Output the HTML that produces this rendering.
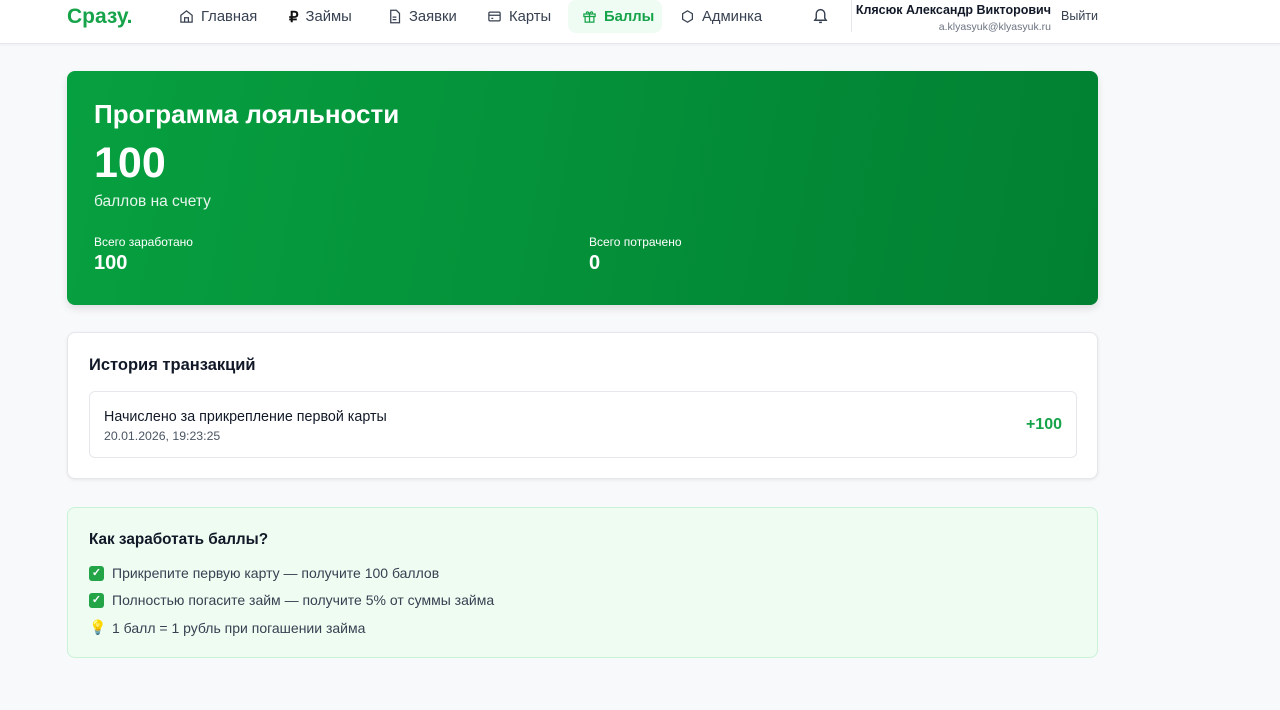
<!DOCTYPE html>
<html><head><meta charset="utf-8"><style>
*{box-sizing:border-box;margin:0;padding:0}
body{width:1280px;height:710px;overflow:hidden;background:#f8f9fb;font-family:"Liberation Sans",sans-serif;color:#111827}
.hdr{height:44px;background:#fff;border-bottom:1px solid #e5e7eb;box-shadow:0 1px 3px rgba(0,0,0,.05);position:relative}
.logo{position:absolute;left:67px;top:5px;font-size:21px;font-weight:bold;color:#16a34a}
.nav a{position:absolute;top:0;display:flex;align-items:center;gap:7px;font-size:14.8px;color:#374151;text-decoration:none;height:33px;white-space:nowrap}
.nav a.act{background:#effcf3;color:#16a34a;font-weight:bold;border-radius:8px;padding:0 12px 0 14px;width:94px}
.nav svg{width:15px;height:15px;fill:none;stroke:currentColor;stroke-width:2;flex-shrink:0}
.bell{position:absolute;left:812px;top:7px}
.sep{position:absolute;left:851px;top:0;height:32px;border-left:1px solid #e5e7eb}
.user{position:absolute;right:229px;top:3px;text-align:right}
.user b{font-size:12.5px;display:block}
.user span{font-size:10.5px;color:#6b7280}
.out{position:absolute;left:1061px;top:9px;font-size:12.5px;color:#374151}
.hero{position:absolute;left:67px;top:71px;width:1031px;height:234px;border-radius:8px;background:linear-gradient(100deg,#07a040,#018032);color:#fff;box-shadow:0 4px 8px rgba(0,0,0,.1)}
.hero h1{position:absolute;left:27px;top:28px;font-size:26px}
.hero .big{position:absolute;left:27px;top:68px;font-size:43px;font-weight:bold}
.hero .sub{position:absolute;left:27px;top:122px;font-size:15.5px;opacity:.9}
.hero .lb{position:absolute;top:164px;font-size:12px}
.hero .vl{position:absolute;top:181px;font-size:20px;font-weight:bold}
.card{position:absolute;left:67px;top:332px;width:1031px;height:147px;background:#fff;border:1px solid #e5e7eb;border-radius:8px;box-shadow:0 1px 3px rgba(0,0,0,.08)}
.card h2{position:absolute;left:21px;top:23px;font-size:16.5px}
.row{position:absolute;left:21px;top:58px;width:988px;height:67px;border:1px solid #e5e7eb;border-radius:6px}
.row .t{position:absolute;left:14px;top:17px;font-size:14.3px}
.row .d{position:absolute;left:14px;top:37px;font-size:12.3px;color:#4b5563}
.row .p{position:absolute;right:14px;top:24px;font-size:16px;font-weight:bold;color:#16a34a}
.info{position:absolute;left:67px;top:507px;width:1031px;height:151px;background:#eefcf2;border:1px solid #c9f2d6;border-radius:8px}
.info h3{position:absolute;left:21px;top:23px;font-size:15.3px}
.info p{position:absolute;left:21px;font-size:14px;color:#374151;display:flex;gap:8px;align-items:center}
.ck{display:inline-block;width:15px;height:15px;background:#22a447;border-radius:3px;color:#fff;font-size:11px;text-align:center;line-height:15px;font-weight:bold}
</style></head><body>
<div class="hdr">
<div class="logo">Сразу.</div>
<div class="nav">
<a style="left:179px"><svg viewBox="0 0 24 24"><path d="M3 10l9-7 9 7v11H3z M9 21v-7h6v7"/></svg>Главная</a>
<a style="left:289px"><span style="font-weight:bold;font-size:15px;color:#111">₽</span>Займы</a>
<a style="left:387px"><svg viewBox="0 0 24 24"><path d="M6 2h9l5 5v15H6z M9 13h6 M9 17h6"/></svg>Заявки</a>
<a style="left:487px"><svg viewBox="0 0 24 24"><rect x="3" y="5" width="18" height="14" rx="2"/><path d="M3 10h18 M7 15h3"/></svg>Карты</a>
<a class="act" style="left:568px"><svg viewBox="0 0 24 24"><rect x="3" y="8" width="18" height="4"/><path d="M5 12v9h14v-9 M12 8v13 M12 8C10 3 6 4 7.5 7 M12 8c2-5 6-4 4.5-1"/></svg>Баллы</a>
<a style="left:680px"><svg viewBox="0 0 24 24"><path d="M12 3l7.8 4.5v9L12 21l-7.8-4.5v-9z"/></svg>Админка</a>
</div>
<svg class="bell" width="17" height="18" viewBox="0 0 24 24" fill="none" stroke="#374151" stroke-width="2"><path d="M6 9a6 6 0 0112 0v6l2 3H4l2-3z M10 21h4"/></svg>
<div class="sep"></div>
<div class="user"><b>Клясюк Александр Викторович</b><span>a.klyasyuk@klyasyuk.ru</span></div>
<div class="out">Выйти</div>
</div>
<div class="hero">
<h1>Программа лояльности</h1>
<div class="big">100</div>
<div class="sub">баллов на счету</div>
<div class="lb" style="left:27px">Всего заработано</div><div class="vl" style="left:27px">100</div>
<div class="lb" style="left:522px">Всего потрачено</div><div class="vl" style="left:522px">0</div>
</div>
<div class="card"><h2>История транзакций</h2>
<div class="row"><div class="t">Начислено за прикрепление первой карты</div><div class="d">20.01.2026, 19:23:25</div><div class="p">+100</div></div></div>
<div class="info"><h3>Как заработать баллы?</h3>
<p style="top:57px"><span class="ck">✓</span>Прикрепите первую карту — получите 100 баллов</p>
<p style="top:84px"><span class="ck">✓</span>Полностью погасите займ — получите 5% от суммы займа</p>
<p style="top:111px"><span style="width:15px;text-align:center;color:#f5c518">💡</span>1 балл = 1 рубль при погашении займа</p>
</div>
</body></html>
